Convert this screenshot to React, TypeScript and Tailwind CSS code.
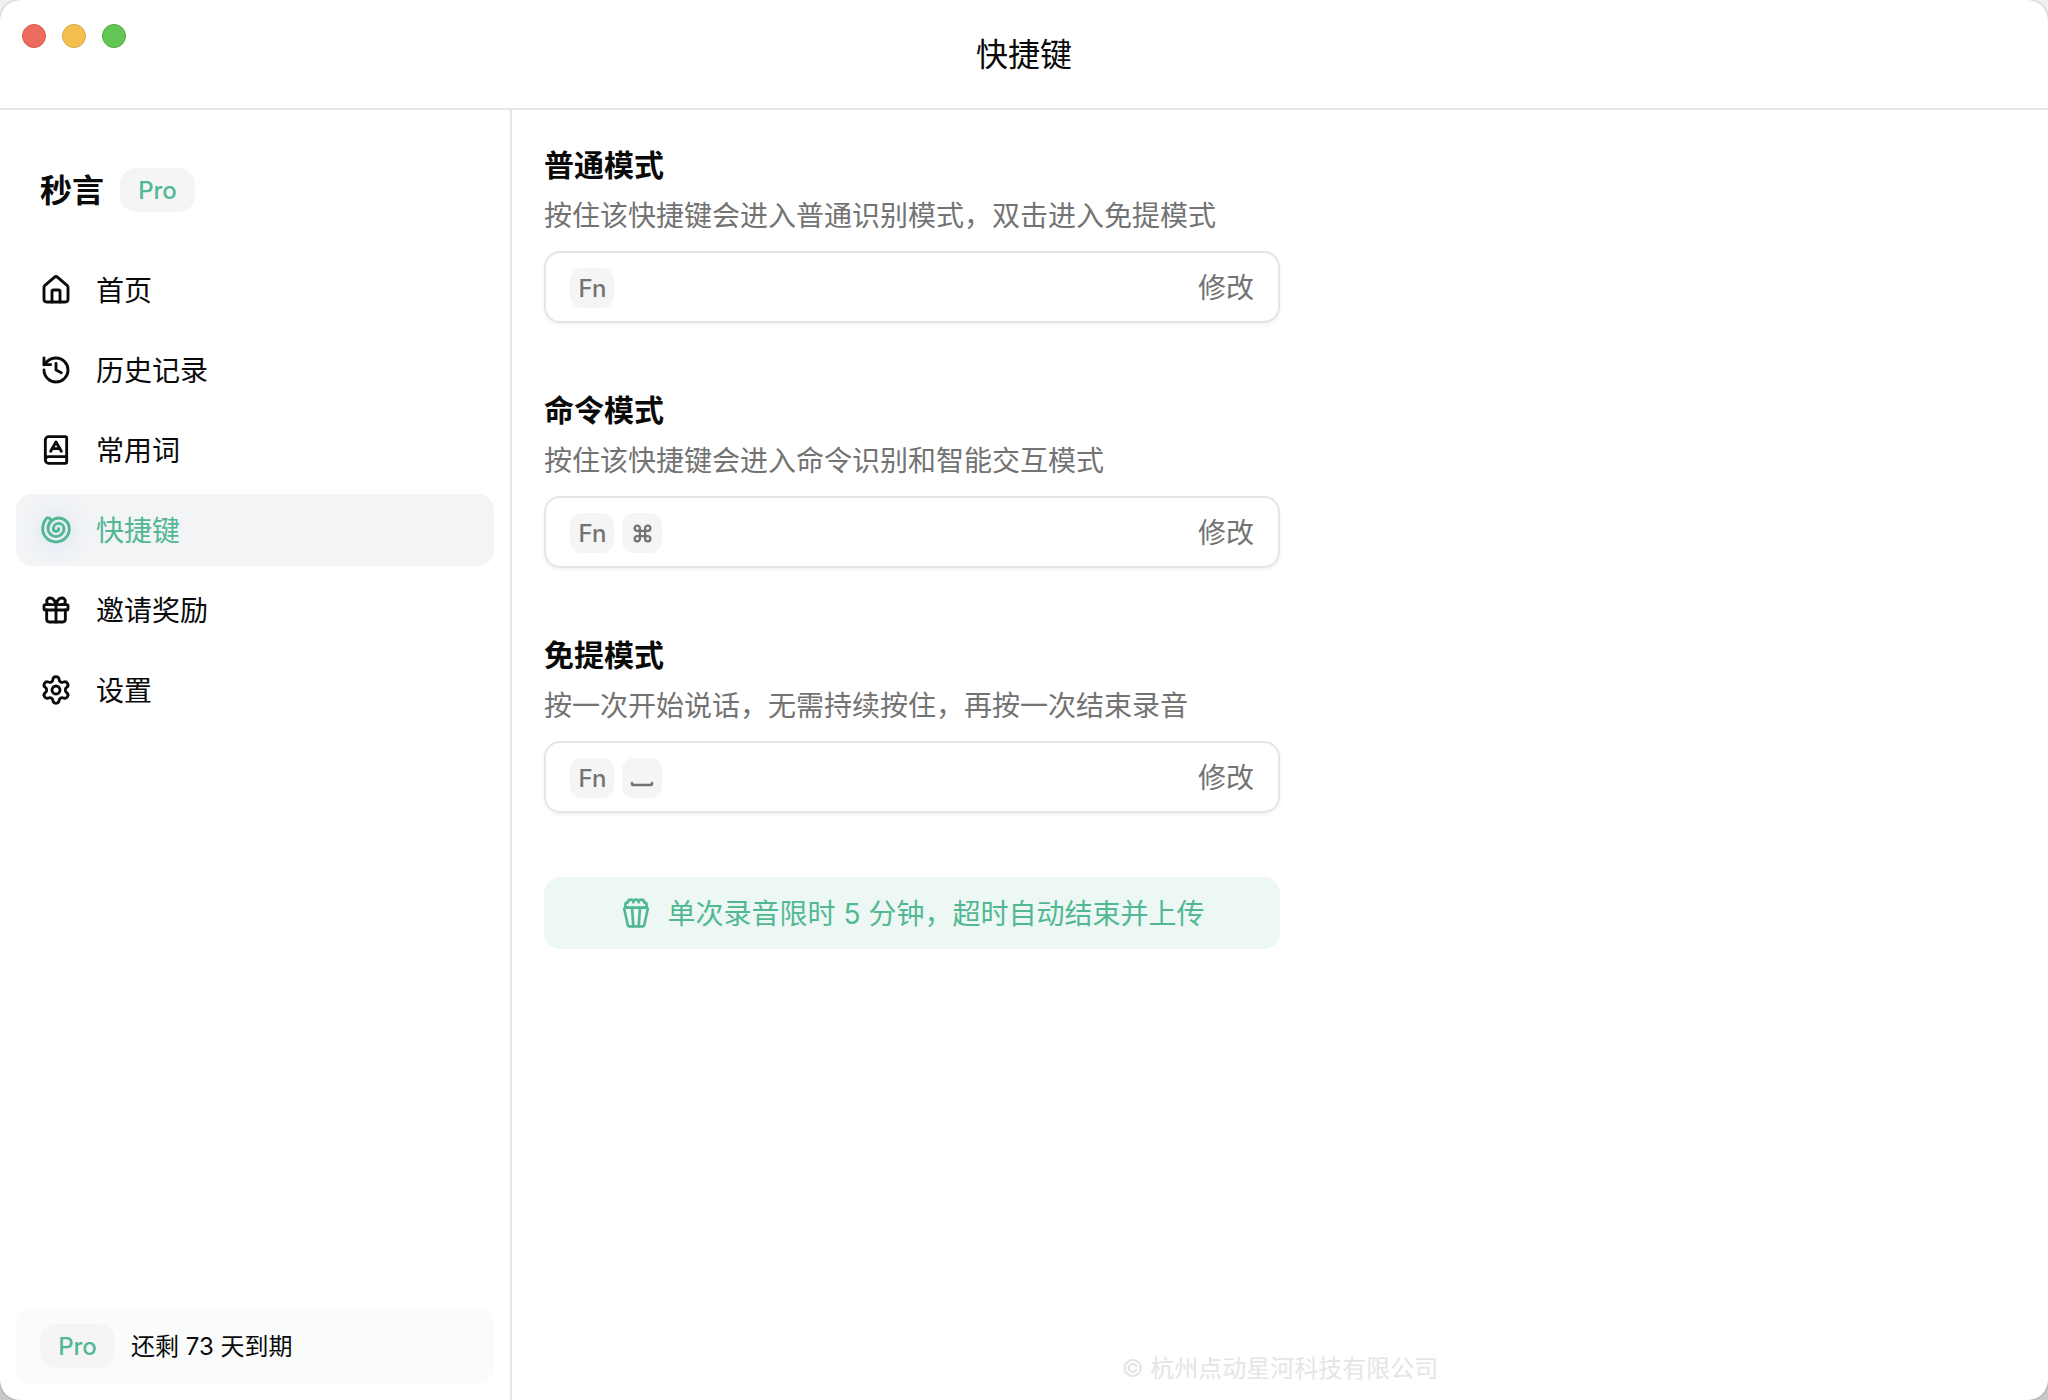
import { BookA, Command, Gift, History, House, Popcorn, Settings, Shell, Space } from "lucide-react";
import type { LucideIcon } from "lucide-react";

interface NavItem {
  label: string;
  icon: LucideIcon;
}

interface Shortcut {
  title: string;
  description: string;
  keys: string[];
}

const navItems: NavItem[] = [
  { label: "首页", icon: House },
  { label: "历史记录", icon: History },
  { label: "常用词", icon: BookA },
  { label: "快捷键", icon: Shell },
  { label: "邀请奖励", icon: Gift },
  { label: "设置", icon: Settings },
];

const shortcuts: Shortcut[] = [
  { title: "普通模式", description: "按住该快捷键会进入普通识别模式，双击进入免提模式", keys: ["Fn"] },
  { title: "命令模式", description: "按住该快捷键会进入命令识别和智能交互模式", keys: ["Fn", "cmd"] },
  { title: "免提模式", description: "按一次开始说话，无需持续按住，再按一次结束录音", keys: ["Fn", "space"] },
];

const ProBadge = () => (
  <span className="flex h-11 w-[75px] items-center justify-center rounded-2xl bg-[#f5f5f5] pt-0.5 text-2xl font-medium text-[#52b893]">
    Pro
  </span>
);

const KeyCap = ({ name }: { name: string }) => {
  if (name === "cmd" || name === "space") {
    return (
      <kbd className="flex h-10 w-10 items-center justify-center rounded-xl bg-[#f5f5f5] text-[#737373]">
        {name === "cmd" ? <Command size={21} strokeWidth={2.6} /> : <Space size={24} strokeWidth={2.6} />}
      </kbd>
    );
  }
  return (
    <kbd className="flex h-10 w-11 items-center justify-center rounded-xl bg-[#f5f5f5] pt-0.5 pl-px font-[Inter] text-2xl font-medium text-[#737373]">
      {name}
    </kbd>
  );
};

const Sidebar = ({ active }: { active: string }) => (
  <aside className="flex w-[512px] shrink-0 flex-col border-r-2 border-[#e5e5e5] px-4 pb-4">
    <div className="mt-[58px] flex h-11 items-center gap-4 pl-6">
      <h1 className="w-16 pt-0.5 text-[32px] leading-none font-bold whitespace-nowrap">秒言</h1>
      <ProBadge />
    </div>
    <nav className="mt-[42px] flex flex-col gap-2">
      {navItems.map(({ label, icon: Icon }) => (
        <a
          key={label}
          className={`flex h-[72px] items-center gap-6 rounded-2xl pl-6 text-[28px] ${
            label === active ? "bg-[#f3f4f6] text-[#52b893]" : ""
          }`}
        >
          <span className="relative flex">
            {/* soft glow behind the active icon */}
            {label === active && (
              <span className="absolute -inset-5 rounded-full bg-[radial-gradient(circle_closest-side,#e4ebf4,#f3f4f6)]" />
            )}
            <Icon size={32} strokeWidth={2.15} className="relative" />
          </span>
          <span className="pt-px">{label}</span>
        </a>
      ))}
    </nav>
    <div className="mt-auto flex h-[76px] items-center gap-4 rounded-2xl bg-[#fafcfb] pl-6 text-2xl">
      <ProBadge />
      <span className="pt-0.5">还剩 73 天到期</span>
    </div>
  </aside>
);

const ShortcutRow = ({ title, description, keys }: Shortcut) => (
  <section>
    <h2 className="text-[30px] leading-[46px] font-semibold">{title}</h2>
    <p className="mt-2 text-[28px] leading-10 text-[#737373]">{description}</p>
    <div className="mt-[15px] flex h-[72px] items-center justify-between rounded-2xl border-2 border-[#e5e5e5] px-6 pt-0.5 shadow-[0_2px_4px_rgba(0,0,0,0.05)]">
      <div className="flex gap-2">
        {keys.map((key) => (
          <KeyCap key={key} name={key} />
        ))}
      </div>
      <button className="text-[28px] text-[#737373]">修改</button>
    </div>
  </section>
);

const App = () => {
  return (
    <div className="h-[1400px] w-[2048px] bg-linear-to-b from-[#f0f0f0] to-[#c8c8c8]">
      <div className="flex h-full flex-col overflow-hidden rounded-[20px] bg-white font-[Inter,'Noto_Sans_CJK_SC',sans-serif] text-[#0a0a0a] shadow-[0_0_2px_rgba(0,0,0,0.4)]">
        <header className="relative flex h-[110px] shrink-0 items-center justify-center border-b-2 border-[#e5e5e5]">
          <div className="absolute top-6 left-[22px] flex gap-4">
            <span className="h-6 w-6 rounded-full border border-[#d9594c] bg-[#ec6b5f]" />
            <span className="h-6 w-6 rounded-full border border-[#dba53c] bg-[#f5bf4f]" />
            <span className="h-6 w-6 rounded-full border border-[#50a73e] bg-[#62c655]" />
          </div>
          <div className="pt-0.5 text-[32px] leading-none">快捷键</div>
        </header>

        <div className="flex min-h-0 flex-1">
          <Sidebar active="快捷键" />
          <main className="flex flex-1 flex-col px-8">
            <div className="mt-8 flex w-[736px] flex-col gap-16">
              {shortcuts.map((item) => (
                <ShortcutRow key={item.title} {...item} />
              ))}
              <div className="flex h-[72px] items-center justify-center gap-4 rounded-2xl bg-[#edf7f3] text-[28px] text-[#52b893]">
                <Popcorn size={32} strokeWidth={2} />
                <span className="pt-0.5">单次录音限时 5 分钟，超时自动结束并上传</span>
              </div>
            </div>
            <footer className="mt-auto mb-[15px] text-center text-2xl text-[#e5e5e5]">© 杭州点动星河科技有限公司</footer>
          </main>
        </div>
      </div>
    </div>
  );
};

export default App;
